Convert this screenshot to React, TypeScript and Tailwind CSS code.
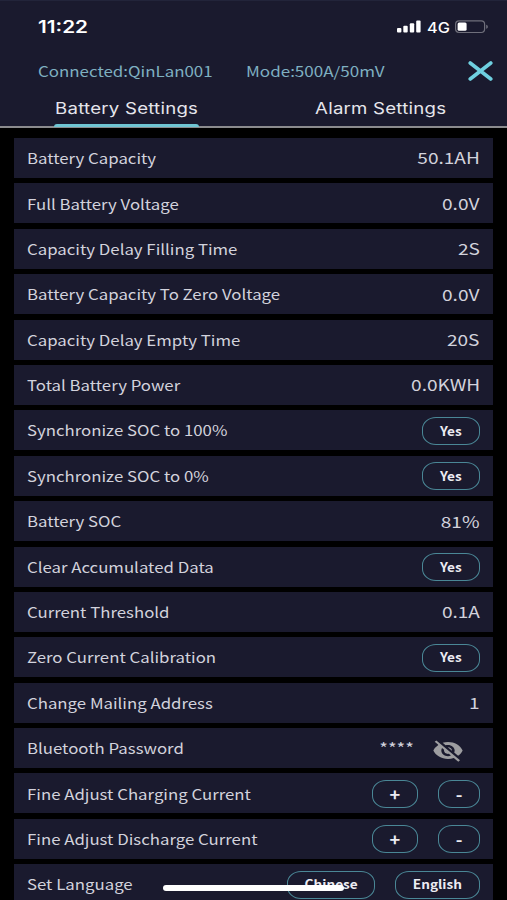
import type { ReactNode } from "react";
import { MdVisibilityOff } from "react-icons/md";

type Row = {
  label: string;
  value?: string;
  buttons?: { text: string; size: string }[];
  secret?: boolean;
};

const YES = [{ text: "Yes", size: "w-[58px] text-[12.4px]" }];
const PLUS_MINUS = [
  { text: "+", size: "w-[46px] text-[16.5px]" },
  { text: "-", size: "w-[42px] text-[16.5px]" },
];

const ROWS: Row[] = [
  { label: "Battery Capacity", value: "50.1AH" },
  { label: "Full Battery Voltage", value: "0.0V" },
  { label: "Capacity Delay Filling Time", value: "2S" },
  { label: "Battery Capacity To Zero Voltage", value: "0.0V" },
  { label: "Capacity Delay Empty Time", value: "20S" },
  { label: "Total Battery Power", value: "0.0KWH" },
  { label: "Synchronize SOC to 100%", buttons: YES },
  { label: "Synchronize SOC to 0%", buttons: YES },
  { label: "Battery SOC", value: "81%" },
  { label: "Clear Accumulated Data", buttons: YES },
  { label: "Current Threshold", value: "0.1A" },
  { label: "Zero Current Calibration", buttons: YES },
  { label: "Change Mailing Address", value: "1" },
  { label: "Bluetooth Password", secret: true },
  { label: "Fine Adjust Charging Current", buttons: PLUS_MINUS },
  { label: "Fine Adjust Discharge Current", buttons: PLUS_MINUS },
  {
    label: "Set Language",
    buttons: [
      { text: "Chinese", size: "w-[88px] text-[12.4px]" },
      { text: "English", size: "w-[85px] text-[12.4px]" },
    ],
  },
];

export default function App() {
  return (
    <div className="relative flex h-[900px] w-[507px] flex-col overflow-hidden bg-black font-['Noto_Sans_CJK_SC',sans-serif] text-[#d2d2dc]">
      <header className="flex h-[128px] shrink-0 flex-col border-t border-[#22243a] bg-[#1a1a2e]">
        <StatusBar />
        <div className="flex h-[38px] items-center pl-[38px] pr-[14.5px] text-[14.2px] text-[#7fb0c1]">
          <span className="w-[208px] shrink-0 pt-px">
            <span className="inline-block origin-left scale-x-[1.19] whitespace-nowrap">Connected:QinLan001</span>
          </span>
          <span className="inline-block origin-left scale-x-[1.2] whitespace-nowrap pt-px">Mode:500A/50mV</span>
          <button className="ml-auto" aria-label="Close">
            <CloseIcon />
          </button>
        </div>
        <nav className="flex flex-1 border-b-2 border-[#8b8b8e] font-['Inter',sans-serif] text-[15.5px] text-[#e6e6ec]">
          <Tab active>Battery Settings</Tab>
          <Tab>Alarm Settings</Tab>
        </nav>
      </header>

      <main className="flex flex-col gap-[5.4px] pl-[13.6px] pr-[13.6px] pt-[10px]">
        {ROWS.map((row) => (
          <SettingRow key={row.label} row={row} />
        ))}
      </main>

      {/* Home indicator */}
      <div className="absolute left-[163px] top-[885px] h-[6px] w-[181px] rounded-full bg-white" />
    </div>
  );
}

function StatusBar() {
  return (
    <div className="flex h-[51px] shrink-0 items-center pl-[38px] pr-[18px] font-['Inter',sans-serif] text-white">
      <span className="origin-left scale-x-[1.22] pt-[2px] text-[17px] font-semibold">11:22</span>
      <div className="ml-auto flex items-center">
        <svg width="24" height="13" viewBox="0 0 24 13" fill="white" aria-hidden="true">
          <rect x="0" y="8" width="4.4" height="4.5" rx="1" />
          <rect x="6.3" y="5.7" width="4.4" height="6.8" rx="1" />
          <rect x="12.8" y="3.2" width="4.4" height="9.3" rx="1" />
          <rect x="19.2" y="0.5" width="4.4" height="12" rx="1" />
        </svg>
        <span className="ml-[5.5px] w-[28.5px]">
          <span className="inline-block origin-left scale-x-[1.16] text-[14px] font-medium">4G</span>
        </span>
        <svg width="34" height="14" viewBox="0 0 34 14" fill="none" aria-hidden="true">
          <rect x="0.6" y="0.9" width="29" height="11.6" rx="3.4" stroke="#6f6f7b" strokeWidth="1.2" />
          <rect x="2.6" y="2.6" width="9" height="8.2" rx="1.5" fill="white" />
          <path d="M31.2 4.7c2.2.6 2.2 3.5 0 4.1z" fill="#6f6f7b" />
        </svg>
      </div>
    </div>
  );
}

function Tab({ active, children }: { active?: boolean; children: ReactNode }) {
  return (
    <button className="relative flex w-1/2 justify-center pt-[7px]">
      <span className="inline-block scale-x-[1.2] whitespace-nowrap tracking-[0.2px]">{children}</span>
      {active && <span className="absolute -bottom-[1px] left-[54px] h-[3px] w-[145px] rounded-t-sm bg-[#6fc5d3]" />}
    </button>
  );
}

function SettingRow({ row }: { row: Row }) {
  return (
    <div className="flex h-[40px] shrink-0 items-center justify-between bg-[#1a1a2e] pl-[13.2px] pr-[13.6px]">
      <span className="origin-left scale-x-[1.158] whitespace-nowrap text-[14.5px]">{row.label}</span>
      {row.value && <span className="origin-right scale-x-[1.23] whitespace-nowrap text-[15.5px]">{row.value}</span>}
      {row.secret && (
        <div className="flex items-center gap-[18px] pr-[16px]">
          <span className="origin-right scale-x-[1.2] text-[15.5px]">****</span>
          <MdVisibilityOff
            preserveAspectRatio="none"
            className="mt-[5px] h-[27px] w-[32px] text-[#9d9da0]"
            aria-hidden="true"
          />
        </div>
      )}
      {row.buttons && (
        <div className="flex gap-[19.5px] pt-px">
          {row.buttons.map((b) => (
            <button
              key={b.text}
              className={`flex h-[28px] items-center justify-center rounded-[14px/12px] border-[1.5px] border-[#4a8796] font-bold text-[#ececf2] ${b.size}`}
            >
              <span className="scale-x-[1.1]">{b.text}</span>
            </button>
          ))}
        </div>
      )}
    </div>
  );
}

function CloseIcon() {
  return (
    <svg width="25" height="20" viewBox="0 0 25 20" fill="none" stroke="#6fd0e0" strokeWidth="3.6" strokeLinecap="round" aria-hidden="true">
      <path d="M2.2 2 22.8 18M22.8 2 2.2 18" />
    </svg>
  );
}
